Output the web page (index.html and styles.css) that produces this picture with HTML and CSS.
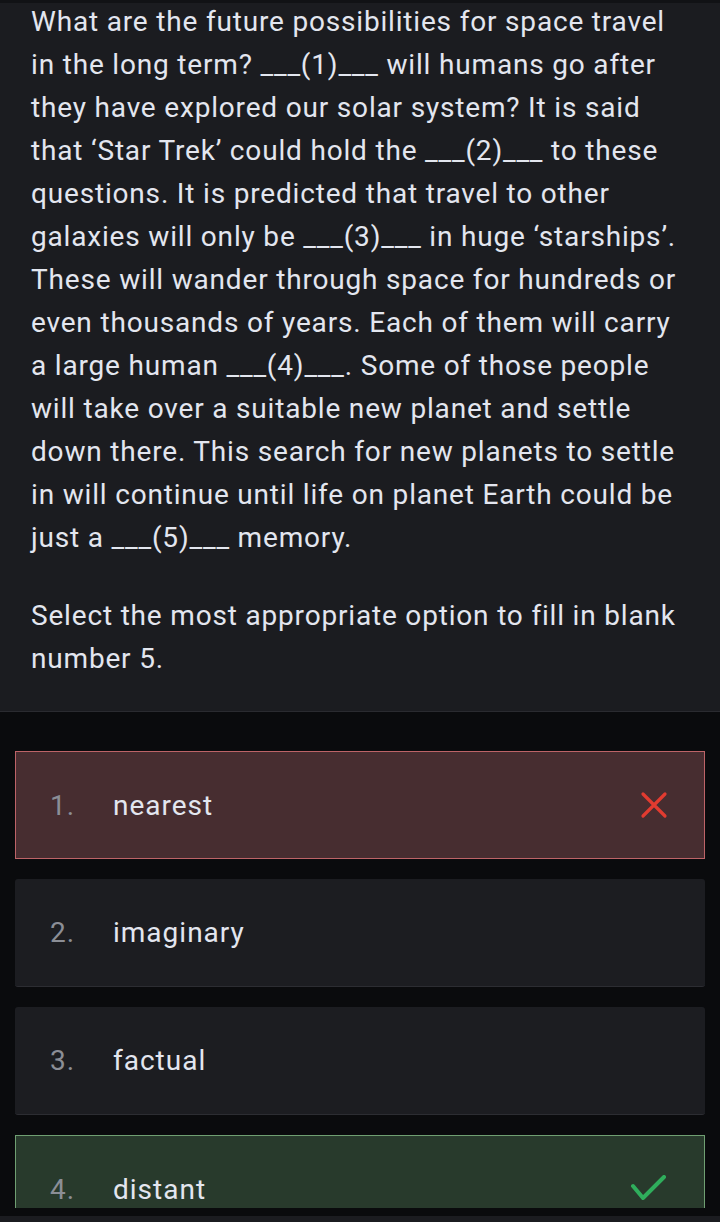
FILE: index.html
```html
<!DOCTYPE html>
<html lang="en">
<head>
<meta charset="utf-8">
<title>Question</title>
<link rel="stylesheet" href="styles.css">
</head>
<body>
<div class="app">
  <div class="topbar"></div>
  <div class="scroll">
    <section class="question">
      <p class="passage">What are the future possibilities for space travel<br>in the long term? ___(1)___ will humans go after<br>they have explored our solar system? It is said<br>that ‘Star Trek’ could hold the ___(2)___ to these<br>questions. It is predicted that travel to other<br>galaxies will only be ___(3)___ in huge ‘starships’.<br>These will wander through space for hundreds or<br>even thousands of years. Each of them will carry<br>a large human ___(4)___. Some of those people<br>will take over a suitable new planet and settle<br>down there. This search for new planets to settle<br>in will continue until life on planet Earth could be<br>just a ___(5)___ memory.</p>
      <p class="prompt">Select the most appropriate option to fill in blank<br>number 5.</p>
    </section>
    <section class="options">
      <div class="option wrong">
        <span class="num">1.</span>
        <span class="label">nearest</span>
        <svg class="mark" width="28" height="28" viewBox="0 0 28 28"><path d="M3 3 L25 25 M25 3 L3 25" stroke="#e23b30" stroke-width="3.2" stroke-linecap="round" fill="none"/></svg>
      </div>
      <div class="option">
        <span class="num">2.</span>
        <span class="label">imaginary</span>
      </div>
      <div class="option">
        <span class="num">3.</span>
        <span class="label">factual</span>
      </div>
      <div class="option right">
        <span class="num">4.</span>
        <span class="label">distant</span>
        <svg class="mark check" width="38" height="28" viewBox="0 0 38 28"><path d="M3 11 L13 23 L34 2" stroke="#2fae5c" stroke-width="4" stroke-linecap="round" stroke-linejoin="round" fill="none"/></svg>
      </div>
    </section>
  </div>
  <div class="footer"><div class="footer-bar"></div></div>
</div>
</body>
</html>
```
FILE: styles.css
```css
* { box-sizing: border-box; }
html, body {
  margin: 0;
  padding: 0;
  background: #0a0b0d;
  height: 1222px;
  overflow: hidden;
}
body {
  font-family: Roboto, "Noto Sans", "Liberation Sans", sans-serif;
  color: #e3e6ef;
}
.app {
  display: flex;
  flex-direction: column;
  height: 1222px;
  position: relative;
}
.topbar {
  position: absolute;
  top: 0;
  left: 0;
  right: 0;
  height: 3px;
  background: #111215;
  z-index: 2;
}
.scroll {
  flex: 1;
  overflow: hidden;
}
.question {
  background: #1b1c20;
  border-bottom: 1px solid #2a2b30;
  padding: 0 0 31px 31px;
}
.passage, .prompt {
  margin: 0;
  font-size: 28px;
  line-height: 43px;
  letter-spacing: 0.82px;
  white-space: nowrap;
}
.prompt {
  margin-top: 35px;
}
.options {
  padding: 39px 15px 0 15px;
  display: flex;
  flex-direction: column;
  gap: 20px;
}
.option {
  height: 108px;
  flex-shrink: 0;
  display: flex;
  align-items: center;
  background: #1c1d21;
  border-radius: 3px;
  border-bottom: 1px solid #2c2d32;
  padding-left: 35px;
  padding-right: 36px;
  font-size: 28px;
  letter-spacing: 1px;
}
.option .num {
  width: 63px;
  color: #8b8e96;
}
.option .label {
  flex: 1;
  color: #e3e6ef;
}
.option.wrong {
  background: #472d30;
  border: 1px solid #bd6367;
  border-radius: 0;
  padding-left: 34px;
}
.option.right {
  background: #283a2c;
  border: 1px solid #6f9f72;
  border-radius: 0;
  padding-left: 34px;
}
.mark { flex-shrink: 0; }
.footer {
  height: 14px;
  flex-shrink: 0;
  padding-top: 8px;
  background: #0a0b0d;
}
.footer-bar {
  height: 6px;
  background: #1b1c20;
}
```
